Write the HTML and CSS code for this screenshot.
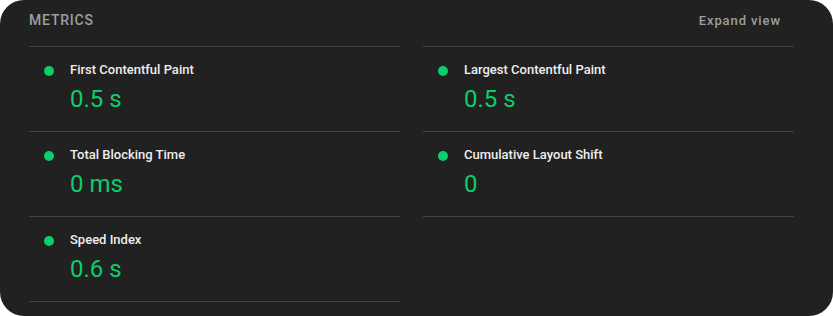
FILE: index.html
```html
<html>
<head>
  <title>Metrics</title>
  <link rel="stylesheet" href="styles.css">
</head>
<body>
  <div class="card">
    <div class="card-header">
      <span class="card-title">Metrics</span>
      <span class="expand">Expand view</span>
    </div>
    <div class="metrics">
      <div class="metric-col">
        <div class="metric">
          <span class="dot"></span>
          <div>
            <div class="metric-name">First Contentful Paint</div>
            <div class="metric-value">0.5 s</div>
          </div>
        </div>
        <div class="metric">
          <span class="dot"></span>
          <div>
            <div class="metric-name">Total Blocking Time</div>
            <div class="metric-value">0 ms</div>
          </div>
        </div>
        <div class="metric">
          <span class="dot"></span>
          <div>
            <div class="metric-name">Speed Index</div>
            <div class="metric-value">0.6 s</div>
          </div>
        </div>
      </div>
      <div class="metric-col">
        <div class="metric">
          <span class="dot"></span>
          <div>
            <div class="metric-name">Largest Contentful Paint</div>
            <div class="metric-value">0.5 s</div>
          </div>
        </div>
        <div class="metric">
          <span class="dot"></span>
          <div>
            <div class="metric-name">Cumulative Layout Shift</div>
            <div class="metric-value">0</div>
          </div>
        </div>
      </div>
    </div>
  </div>
</body>
</html>
```

FILE: styles.css
```css
body {
  margin: 0;
  background-color: #ffffff;
  font-family: Roboto, "Liberation Sans", Arial, sans-serif;
}

.card {
  width: 833px;
  height: 316px;
  box-sizing: border-box;
  background-color: #212121;
  border-radius: 24px;
  padding: 10px 39px 14px 29px;
}

.card-header {
  display: flex;
  justify-content: space-between;
  align-items: baseline;
  height: 20px;
  margin-bottom: 16px;
}

.card-title {
  font-size: 14px;
  line-height: 20px;
  font-weight: 500;
  letter-spacing: 0.8px;
  text-transform: uppercase;
  color: #9e9e9e;
}

.expand {
  font-size: 13px;
  line-height: 20px;
  font-weight: 500;
  letter-spacing: 0.9px;
  color: #9e9e9e;
  margin-right: 13px;
}

.metrics {
  display: grid;
  grid-template-columns: 1fr 1fr;
  column-gap: 23px;
}

.metric {
  display: flex;
  gap: 16px;
  border-top: 1px solid #444444;
  padding: 14px 0 16px 15px;
}

.metric:last-child {
  border-bottom: 1px solid #444444;
}

.dot {
  width: 10px;
  height: 10px;
  margin-top: 5px;
  border-radius: 50%;
  background-color: #0cce6b;
  flex-shrink: 0;
}

.metric-name {
  font-size: 13px;
  line-height: 18px;
  font-weight: 500;
  color: #eeeeee;
}

.metric-value {
  font-size: 24px;
  line-height: 32px;
  margin-top: 4px;
  color: #0cce6b;
}
```
